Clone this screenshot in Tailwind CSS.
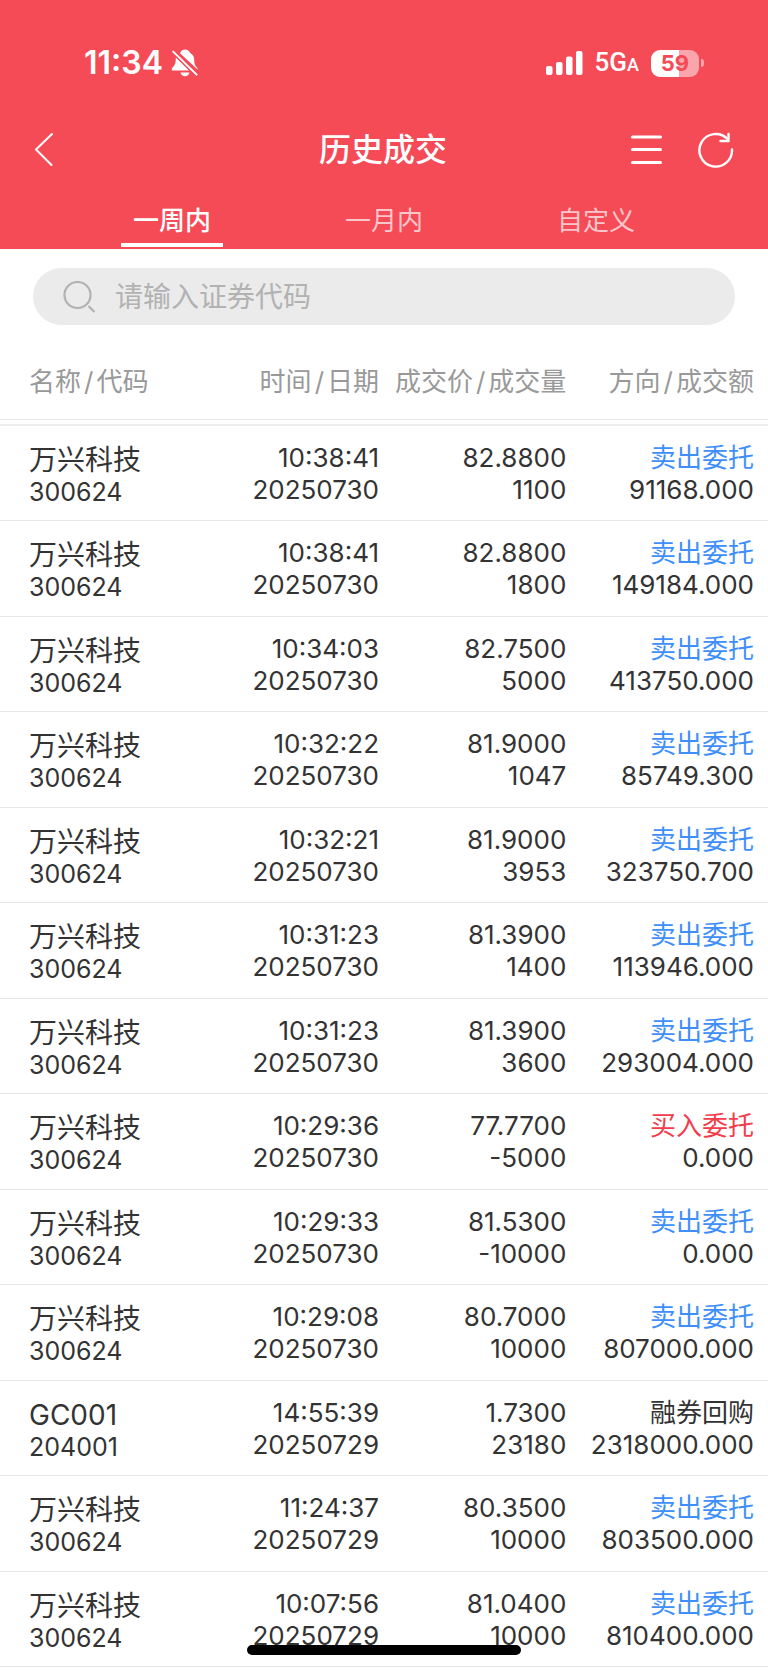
<!DOCTYPE html>
<html lang="zh-CN">
<head>
    <meta charset="UTF-8">
    <meta name="viewport" content="width=device-width, initial-scale=1.0">
    <title>历史成交</title>
    <script src="https://cdn.jsdelivr.net/npm/@tailwindcss/browser@4"></script>
</head>
<body class="bg-white text-[#333333] font-['Inter','Noto_Sans_CJK_SC',sans-serif]">

    <header class="bg-[#f54b57] text-white">
        <!-- Status bar -->
        <div class="flex items-center justify-between h-[110px] pt-4 pl-[84px] pr-[64px]">
            <div class="flex items-center gap-2">
                <span class="text-[32px] leading-8 font-semibold">11:34</span>
                <svg class="w-[28px] h-[28px]" viewBox="0 0 28 28" fill="currentColor">
                    <path d="M9 4.200C10 1.700 11.800.6 14 .6c2.400 0 4.300 1.300 5.200 3.400 2.600 1.200 4 3.700 4 7.200 0 3.800.8 5.400 2.500 7 .8.8 1 1.400.900 2.300z"/>
                    <path d="M4.800 8.200 18.300 21.500H1.800C.5 21.500.4 19.800 1.400 18.700 4 16.200 4.900 14 4.800 8.200z"/>
                    <path d="M9.500 23.400h9c-.4 2.200-2.400 3.800-4.500 3.800s-4.100-1.600-4.500-3.800z"/>
                    <path d="M2.200 2.600 25.600 25.600" fill="none" stroke="#f54b57" stroke-width="4.500"/>
                    <path d="M2.200 2.600 25.600 25.600" fill="none" stroke="currentColor" stroke-width="2" stroke-linecap="round"/>
                </svg>
            </div>
            <div class="flex items-center gap-3">
                <svg class="w-[37px] h-[26px]" viewBox="0 0 37 26" fill="currentColor">
                    <rect x="0" y="16" width="6.500" height="9" rx="2"/>
                    <rect x="10" y="12" width="6.500" height="13" rx="2"/>
                    <rect x="20" y="6.500" width="6.500" height="18.500" rx="2"/>
                    <rect x="30" y="1" width="6.500" height="24" rx="2"/>
                </svg>
                <span class="font-['Roboto',sans-serif] text-[26px] leading-8 font-medium">5G<span class="text-[18px]">A</span></span>
                <div class="flex items-center gap-0.5">
                    <div class="flex items-center justify-center w-[48px] h-[27px] rounded-[9px] bg-linear-to-r from-white from-58% to-white/50 to-58% text-[#f54b57] text-[22px] leading-6 font-bold">59</div>
                    <div class="w-[3px] h-2 rounded-r-full bg-white/50"></div>
                </div>
            </div>
        </div>

        <!-- Title bar -->
        <div class="grid grid-cols-3 items-center h-20 pl-8 pr-[34px]">
            <button type="button" aria-label="返回" class="justify-self-start">
                <svg class="w-6 h-9" viewBox="0 0 24 36" fill="none" stroke="currentColor" stroke-width="2" stroke-linecap="round" stroke-linejoin="round">
                    <path d="M20 2 4 17.500 19.500 33"/>
                </svg>
            </button>
            <h1 class="justify-self-center text-[32px] leading-10 font-medium">历史成交</h1>
            <div class="justify-self-end flex items-center gap-9">
                <button type="button" aria-label="菜单">
                    <svg class="w-8 h-9" viewBox="0 0 32 36" fill="none" stroke="currentColor" stroke-width="3" stroke-linecap="round">
                        <path d="M2.500 5h28M2.500 17.500h28M2.500 30.500h28"/>
                    </svg>
                </button>
                <button type="button" aria-label="刷新">
                    <svg class="w-9 h-9" viewBox="0 0 36 36" fill="none" stroke="currentColor" stroke-width="2.400" stroke-linecap="round" stroke-linejoin="round">
                        <path d="M34 17.500A16.300 16.300 0 1 1 29.500 7"/>
                        <path d="M30.500 2v7h-8"/>
                    </svg>
                </button>
            </div>
        </div>

        <!-- Range tabs -->
        <nav class="grid grid-cols-3 justify-items-center h-[59px] px-[66px] pb-0.5 text-[26px] leading-9">
            <button type="button" class="px-3 pt-2 border-b-4 border-white font-medium">一周内</button>
            <button type="button" class="px-3 pt-2 border-b-4 border-transparent text-white/70">一月内</button>
            <button type="button" class="px-3 pt-2 border-b-4 border-transparent text-white/70">自定义</button>
        </nav>
    </header>

    <main>
        <div class="px-[33px] pt-[19px] pb-5">
            <label class="flex items-center gap-5 h-[57px] pl-[30px] pr-8 rounded-full bg-[#ebebeb] text-[#b2b2b2]">
                <svg class="w-8 h-8 shrink-0" viewBox="0 0 32 32" fill="none" stroke="currentColor" stroke-width="2.200">
                    <circle cx="14.500" cy="14" r="13"/>
                    <path d="M25.500 25l6 6"/>
                </svg>
                <input type="text" aria-label="证券代码" placeholder="请输入证券代码" class="w-full bg-transparent outline-none text-[28px] leading-10 text-[#333333] placeholder:text-[#b2b2b2]">
            </label>
        </div>

        <table class="w-full table-fixed border-collapse">
            <thead class="text-[26px] leading-8 text-[#999999]">
                <tr class="h-[74px] border-b border-[#e6e6e6]">
                    <th class="pl-[29px] text-left font-normal whitespace-nowrap">名称<span class="px-[3px]">/</span>代码</th>
                    <th class="w-[26%] pr-[5px] text-right font-normal whitespace-nowrap">时间<span class="px-[3px]">/</span>日期</th>
                    <th class="w-[24%] pr-0.5 text-right font-normal whitespace-nowrap">成交价<span class="px-[3px]">/</span>成交量</th>
                    <th class="w-[26%] pr-[14px] text-right font-normal whitespace-nowrap">方向<span class="px-[3px]">/</span>成交额</th>
                </tr>
                <tr class="h-[6px] border-b-2 border-[#eeeeee]"><td colspan="4"></td></tr>
            </thead>
            <tbody id="deals" class="text-[26px] leading-8"></tbody>
        </table>
    </main>

    <!-- Home indicator -->
    <div class="fixed bottom-[15px] left-1/2 -translate-x-1/2 w-[274px] h-[10px] rounded-full bg-black"></div>

    <script>
        const SELL = '卖出委托';
        const BUY = '买入委托';

        // name, code, time, date, price, volume, direction, amount
        const deals = [
            ['万兴科技', '300624', '10:38:41', '20250730', '82.8800', '1100', SELL, '91168.000'],
            ['万兴科技', '300624', '10:38:41', '20250730', '82.8800', '1800', SELL, '149184.000'],
            ['万兴科技', '300624', '10:34:03', '20250730', '82.7500', '5000', SELL, '413750.000'],
            ['万兴科技', '300624', '10:32:22', '20250730', '81.9000', '1047', SELL, '85749.300'],
            ['万兴科技', '300624', '10:32:21', '20250730', '81.9000', '3953', SELL, '323750.700'],
            ['万兴科技', '300624', '10:31:23', '20250730', '81.3900', '1400', SELL, '113946.000'],
            ['万兴科技', '300624', '10:31:23', '20250730', '81.3900', '3600', SELL, '293004.000'],
            ['万兴科技', '300624', '10:29:36', '20250730', '77.7700', '-5000', BUY, '0.000'],
            ['万兴科技', '300624', '10:29:33', '20250730', '81.5300', '-10000', SELL, '0.000'],
            ['万兴科技', '300624', '10:29:08', '20250730', '80.7000', '10000', SELL, '807000.000'],
            ['GC001', '204001', '14:55:39', '20250729', '1.7300', '23180', '融券回购', '2318000.000'],
            ['万兴科技', '300624', '11:24:37', '20250729', '80.3500', '10000', SELL, '803500.000'],
            ['万兴科技', '300624', '10:07:56', '20250729', '81.0400', '10000', SELL, '810400.000'],
        ];

        const directionColor = {
            [SELL]: 'text-[#3f8ffb]',
            [BUY]: 'text-[#f23d4c]',
        };

        document.getElementById('deals').innerHTML = deals.map(([name, code, time, date, price, volume, direction, amount]) => `
            <tr class="h-[95px] even:h-[96px] border-b border-[#e6e6e6] align-top">
                <td class="pl-[29px] pt-[18px]">
                    <div class="text-[28px]">${name}</div>
                    <div class="text-[25px]">${code}</div>
                </td>
                <td class="pr-[5px] pt-4 text-right"><div>${time}</div><div>${date}</div></td>
                <td class="pr-0.5 pt-4 text-right"><div>${price}</div><div>${volume}</div></td>
                <td class="pr-[14px] pt-4 text-right">
                    <div class="${directionColor[direction] || ''}">${direction}</div>
                    <div>${amount}</div>
                </td>
            </tr>`).join('');
    </script>

</body>
</html>
